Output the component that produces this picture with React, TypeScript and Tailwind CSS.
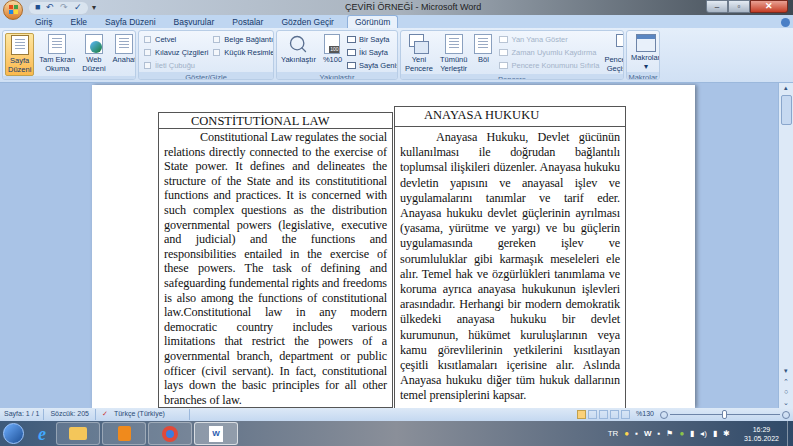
import { Search } from "lucide-react";

const ui = { fontFamily: '"Segoe UI", "Liberation Sans", Arial, sans-serif' };
const serif = { fontFamily: '"Liberation Serif", "Times New Roman", serif' };

const tabs = ["Giriş", "Ekle", "Sayfa Düzeni", "Başvurular", "Postalar", "Gözden Geçir"];

function PageIcon({ active }: { active?: boolean }) {
  return (
    <div className={`h-[20px] w-[18px] border ${active ? "border-[#9a7a3a] bg-white" : "border-[#8aa0bf] bg-white"} flex flex-col gap-[2px] p-[3px]`}>
      <div className="h-[1px] bg-[#9aaac4]" />
      <div className="h-[1px] bg-[#9aaac4]" />
      <div className="h-[1px] bg-[#9aaac4]" />
      <div className="h-[1px] bg-[#9aaac4]" />
    </div>
  );
}

function Group({ label, children, w }: { label: string; children: React.ReactNode; w: string }) {
  return (
    <div className={`${w} flex h-full flex-col overflow-hidden rounded-[3px] border border-[#b8cde6] bg-gradient-to-b from-[#f1f6fd] to-[#dbe7f6]`}>
      <div className="flex flex-1 items-start gap-[3px] px-[2px] pt-[2px]">{children}</div>
      <div className="h-[11px] bg-[#c9dbf1] text-center text-[7.5px] leading-[11px] text-[#4a6a96] whitespace-nowrap">{label}</div>
    </div>
  );
}

function Big({ label, active, icon }: { label: string; active?: boolean; icon?: React.ReactNode }) {
  return (
    <div className={`flex flex-col items-center rounded-[2px] px-[2px] pt-[1px] pb-[1px] ${active ? "bg-gradient-to-b from-[#fde6a0] to-[#fbb94c] border border-[#c2a14d]" : ""}`}>
      {icon ?? <PageIcon active={active} />}
      <div className="mt-[2px] text-center text-[7.5px] leading-[8.5px] text-[#15396b] whitespace-pre">{label}</div>
    </div>
  );
}

function Chk({ label, dim }: { label: string; dim?: boolean }) {
  return (
    <div className={`flex items-center gap-[4px] whitespace-nowrap text-[7.5px] leading-[13px] ${dim ? "text-[#9fb0c7]" : "text-[#15396b]"}`}>
      <span className="h-[7px] w-[7px] border border-[#b0bfd3] bg-[#f4f7fb]" />
      {label}
    </div>
  );
}

function Small({ label, dim }: { label: string; dim?: boolean }) {
  return (
    <div className={`flex items-center gap-[3px] whitespace-nowrap text-[7.5px] leading-[13px] ${dim ? "text-[#a3b3c9]" : "text-[#15396b]"}`}>
      <span className={`h-[7px] w-[9px] border ${dim ? "border-[#b8c4d4]" : "border-[#5a6f90]"} bg-white`} />
      {label}
    </div>
  );
}

export default function App() {
  return (
    <div className="flex h-[446px] w-[793px] flex-col overflow-hidden bg-[#a9c3e6]" style={ui}>
      {/* title bar */}
      <div className="relative flex h-[15px] items-center bg-gradient-to-r from-[#c9d6e6] via-[#a9b3be] to-[#3e4852]">
        <div className="ml-[3px] mt-[4px] h-[20px] w-[20px] rounded-full bg-gradient-to-b from-[#f8d9a0] to-[#d87d2a] border border-[#a96a2a] z-10 flex items-center justify-center">
          <div className="grid grid-cols-2 gap-[1px]">
            <span className="h-[4px] w-[4px] bg-[#e64a19]" />
            <span className="h-[4px] w-[4px] bg-[#43a047]" />
            <span className="h-[4px] w-[4px] bg-[#1e88e5]" />
            <span className="h-[4px] w-[4px] bg-[#fdd835]" />
          </div>
        </div>
        <div className="ml-[6px] flex h-[12px] items-center gap-[6px] rounded-full bg-[#dfe8f3]/80 px-[6px] text-[9px] text-[#1f4f8f]">
          <span>■</span><span>↶</span><span className="text-[#8a9ab0]">↷</span><span>✓</span>
        </div>
        <span className="ml-[4px] text-[8px] text-[#333]">▾</span>
        <div className="absolute left-[345px] text-[9px] text-[#222]">ÇEVİRİ ÖRNEĞİ - Microsoft Word</div>
        <div className="ml-auto mr-[5px] flex h-[13px] self-start">
          <div className="flex w-[22px] items-center justify-center rounded-bl-[3px] border border-[#6d7b8c] bg-gradient-to-b from-[#e4ebf3] to-[#a9b6c6] text-[8px]">–</div>
          <div className="flex w-[22px] items-center justify-center border border-[#6d7b8c] bg-gradient-to-b from-[#e4ebf3] to-[#a9b6c6] text-[8px]">▫</div>
          <div className="flex w-[38px] items-center justify-center rounded-br-[3px] border border-[#7a2a1e] bg-gradient-to-b from-[#e8a093] to-[#c43a22] text-[9px] font-bold text-white">✕</div>
        </div>
      </div>
      {/* tabs */}
      <div className="flex h-[13px] items-end bg-[#bfd6f1] pl-[26px] text-[8.5px] text-[#15396b]">
        {tabs.map((t) => (
          <div key={t} className="px-[9px] leading-[12px]">{t}</div>
        ))}
        <div className="ml-[4px] rounded-t-[3px] border border-b-0 border-[#8eb0db] bg-[#e9f1fb] px-[7px] leading-[12px]">Görünüm</div>
        <div className="ml-auto mr-[3px] mb-[1px] h-[9px] w-[9px] rounded-full bg-[#4a7fc6]" />
      </div>
      {/* ribbon */}
      <div className="flex h-[55px] gap-[2px] border-b border-[#9bb8dc] bg-gradient-to-b from-[#e4eefa] to-[#d0e0f4] px-[2px] py-[2px]">
        <Group label="Belge Görünümleri" w="w-[134px]">
          <Big label={"Sayfa\nDüzeni"} active />
          <Big label={"Tam Ekran\nOkuma"} />
          <Big label={"Web\nDüzeni"} icon={<div className="h-[20px] w-[18px] border border-[#8aa0bf] bg-white flex items-end justify-end"><div className="h-[12px] w-[12px] rounded-full bg-gradient-to-br from-[#5fb7ff] to-[#1d7a2e]" /></div>} />
          <Big label="Anahat" />
          <Big label="Taslak" />
        </Group>
        <Group label="Göster/Gizle" w="w-[136px]">
          <div className="flex flex-col pl-[3px]">
            <Chk label="Cetvel" />
            <Chk label="Kılavuz Çizgileri" />
            <Chk label="İleti Çubuğu" dim />
          </div>
          <div className="ml-[2px] flex flex-col">
            <Chk label="Belge Bağlantıları" />
            <Chk label="Küçük Resimler" />
          </div>
        </Group>
        <Group label="Yakınlaştır" w="w-[122px]">
          <Big label="Yakınlaştır" icon={<Search size={20} strokeWidth={1.6} className="text-[#5a6f90]" />} />
          <Big label="%100" icon={<div className="relative h-[20px] w-[16px] border border-[#8aa0bf] bg-white"><span className="absolute bottom-0 right-0 bg-[#555] px-[1px] text-[5px] text-white">100</span></div>} />
          <div className="flex flex-col">
            <Small label="Bir Sayfa" />
            <Small label="İki Sayfa" />
            <Small label="Sayfa Genişliği" />
          </div>
        </Group>
        <Group label="Pencere" w="w-[224px]">
          <Big label={"Yeni\nPencere"} icon={<div className="relative h-[20px] w-[20px]"><div className="absolute left-0 top-0 h-[13px] w-[15px] border border-[#6d84a8] bg-white" /><div className="absolute bottom-0 right-0 h-[13px] w-[15px] border border-[#6d84a8] bg-[#dde8f6]" /></div>} />
          <Big label={"Tümünü\nYerleştir"} />
          <Big label={"Böl"} />
          <div className="flex flex-col pl-[2px]">
            <Small label="Yan Yana Göster" dim />
            <Small label="Zaman Uyumlu Kaydırma" dim />
            <Small label="Pencere Konumunu Sıfırla" dim />
          </div>
          <Big label={"Pencerelerde\nGeçiş Yap ▾"} icon={<div className="relative h-[20px] w-[22px]"><div className="absolute left-0 top-0 h-[13px] w-[16px] border border-[#6d84a8] bg-white" /><div className="absolute bottom-0 right-0 h-[11px] w-[14px] border border-[#6d84a8] bg-[#dde8f6]" /></div>} />
        </Group>
        <Group label="Makrolar" w="w-[34px]">
          <Big label={"Makrolar\n▾"} icon={<div className="h-[18px] w-[20px] border border-[#6d84a8] bg-[#e8f0fa]"><div className="h-[4px] bg-[#5a86c2]" /></div>} />
        </Group>
      </div>
      {/* document area */}
      <div className="flex flex-1 overflow-hidden">
        <div className="flex flex-1 pl-[92px] pt-[2px]">
          <div className="w-[603px] bg-white shadow-[2px_0_4px_rgba(0,0,0,0.35)] pl-[66px] pt-[21px] flex items-start text-[#111]" style={serif}>
            <div className="mt-[6px] w-[235px] border border-[#555]">
              <div className="h-[16px] border-b border-[#555] pl-[32px] text-[12.5px] leading-[16px]">CONSTİTUTİONAL LAW</div>
              <p className="px-[5px] pt-[1px] text-justify text-[12.2px] leading-[14.6px] tracking-[-0.1px]">
                <span className="inline-block w-[36px]" />Constitutional Law regulates the social relations directly connected to the exercise of State power. It defines and delineates the structure of the State and its constitutitional functions and practices. It is concerned with such complex questions as the distribution governmental powers (legislative, executive and judicial) and the functions and responsibilities entailed in the exercise of these powers. The task of defining and safeguarding fundemental rights and freedoms is also among the functions of constitutional law.Constitutional law in any modern democratic country includes various limitations that restrict the powers of a governmental branch, department or public officer (civil servant). In fact, constitutional lays down the basic principles for all other branches of law.
              </p>
            </div>
            <div className="ml-[1px] w-[232px] border border-[#555]">
              <div className="h-[20px] border-b border-[#555] pl-[29px] text-[12.5px] leading-[16px]">ANAYASA HUKUKU</div>
              <p className="px-[5px] pt-[3px] pb-[22px] text-justify text-[12.2px] leading-[15.2px] tracking-[-0.1px]">
                <span className="inline-block w-[36px]" />Anayasa Hukuku, Devlet gücünün kullanılması ile doğrudan bağlantılı toplumsal ilişkileri düzenler. Anayasa hukuku devletin yapısını ve anayasal işlev ve uygulamalarını tanımlar ve tarif eder. Anayasa hukuku devlet güçlerinin ayrılması (yasama, yürütme ve yargı) ve bu güçlerin uygulamasında gereken işlev ve sorumluluklar gibi karmaşık meseleleri ele alır. Temel hak ve özgürlükleri tanımlama ve koruma ayrıca anayasa hukukunun işlevleri arasındadır. Herhangi bir modern demokratik ülkedeki anayasa hukuku bir devlet kurumunun, hükümet kuruluşlarının veya kamu görevlilerinin yetkilerini kısıtlayan çeşitli kısıtlamaları içerisine alır. Aslında Anayasa hukuku diğer tüm hukuk dallarının temel prensiplerini kapsar.
              </p>
            </div>
          </div>
          <div className="flex-1" />
        </div>
        <div className="flex w-[15px] flex-col items-center border-l border-[#9bb8dc] bg-[#dde9f7] text-[7px] text-[#34557f]">
          <div className="h-[12px]">▴</div>
          <div className="h-[30px] w-[11px] rounded-[2px] border border-[#8aa6cc] bg-[#c6d9f1]" />
          <div className="flex-1" />
          <div>▾</div><div>⌃</div><div>○</div><div>⌄</div>
        </div>
      </div>
      {/* status bar */}
      <div className="flex h-[13px] items-center bg-gradient-to-b from-[#dde9f7] to-[#c4d8f0] text-[7px] text-[#2a4a75]">
        <span className="px-[4px]">Sayfa: 1 / 1</span>
        <span className="border-l border-[#9bb8dc] px-[6px]">Sözcük: 205</span>
        <span className="border-l border-[#9bb8dc] px-[6px] text-[#c33]">✓</span>
        <span className="border-r border-[#9bb8dc] pr-[24px]">Türkçe (Türkiye)</span>
        <div className="ml-auto flex items-center gap-[2px] pr-[3px]">
          <span className="h-[9px] w-[9px] border border-[#c2a14d] bg-[#fbd17a]" />
          <span className="h-[9px] w-[9px] border border-[#9bb8dc]" />
          <span className="h-[9px] w-[9px] border border-[#9bb8dc]" />
          <span className="h-[9px] w-[9px] border border-[#9bb8dc]" />
          <span className="h-[9px] w-[9px] border border-[#9bb8dc]" />
          <span className="ml-[4px]">%130</span>
          <span className="ml-[4px] h-[8px] w-[8px] rounded-full border border-[#6d84a8]" />
          <div className="relative h-[1px] w-[110px] bg-[#6d84a8]"><span className="absolute left-[52px] top-[-4px] h-[9px] w-[5px] rounded-[2px] border border-[#6d84a8] bg-white" /></div>
          <span className="h-[8px] w-[8px] rounded-full border border-[#6d84a8]" />
        </div>
      </div>
      {/* taskbar */}
      <div className="flex h-[25px] items-center bg-gradient-to-r from-[#3d5a7a] via-[#8a8f99] to-[#2f4968] text-white">
        <div className="ml-[3px] h-[21px] w-[21px] rounded-full bg-gradient-to-br from-[#6fb0ff] to-[#1c4f96] border border-[#9cc6ff]" />
        <div className="ml-[14px] text-[18px] font-bold italic leading-none text-[#41a8ff]" style={serif}>e</div>
        <div className="ml-[10px] flex h-[23px] w-[44px] items-center justify-center rounded-[3px] border border-[#ffffff55] bg-[#ffffff22]"><div className="h-[13px] w-[18px] rounded-[2px] bg-[#f4c65a]" /></div>
        <div className="ml-[2px] flex h-[23px] w-[44px] items-center justify-center rounded-[3px] border border-[#ffffff55] bg-[#ffffff22]"><div className="h-[15px] w-[13px] rounded-[2px] bg-[#f08a1c]" /></div>
        <div className="ml-[2px] flex h-[23px] w-[44px] items-center justify-center rounded-[3px] border border-[#ffffff55] bg-[#ffffff22]"><div className="h-[16px] w-[16px] rounded-full border-[4px] border-[#e04a3a] bg-[#3b7de0]" /></div>
        <div className="ml-[2px] flex h-[23px] w-[44px] items-center justify-center rounded-[3px] border border-[#ffffffaa] bg-[#ffffff44]"><div className="flex h-[16px] w-[14px] items-center justify-center bg-white text-[8px] font-bold text-[#2a5bb0]">W</div></div>
        <div className="ml-auto flex items-center gap-[6px] pr-[8px] text-[8px]">
          <span>TR</span><span className="text-[#ffd54f]">●</span><span>▪</span><span className="font-bold">W</span><span>▪</span><span>⚑</span><span className="text-[#8bc34a]">●</span><span>▮</span><span>◂)</span><span>▮</span><span>✱</span>
          <div className="ml-[8px] flex flex-col items-center text-[7px] leading-[9px]"><span>16:29</span><span>31.05.2022</span></div>
        </div>
        <div className="h-full w-[6px] border-l border-[#ffffff66]" />
      </div>
    </div>
  );
}
